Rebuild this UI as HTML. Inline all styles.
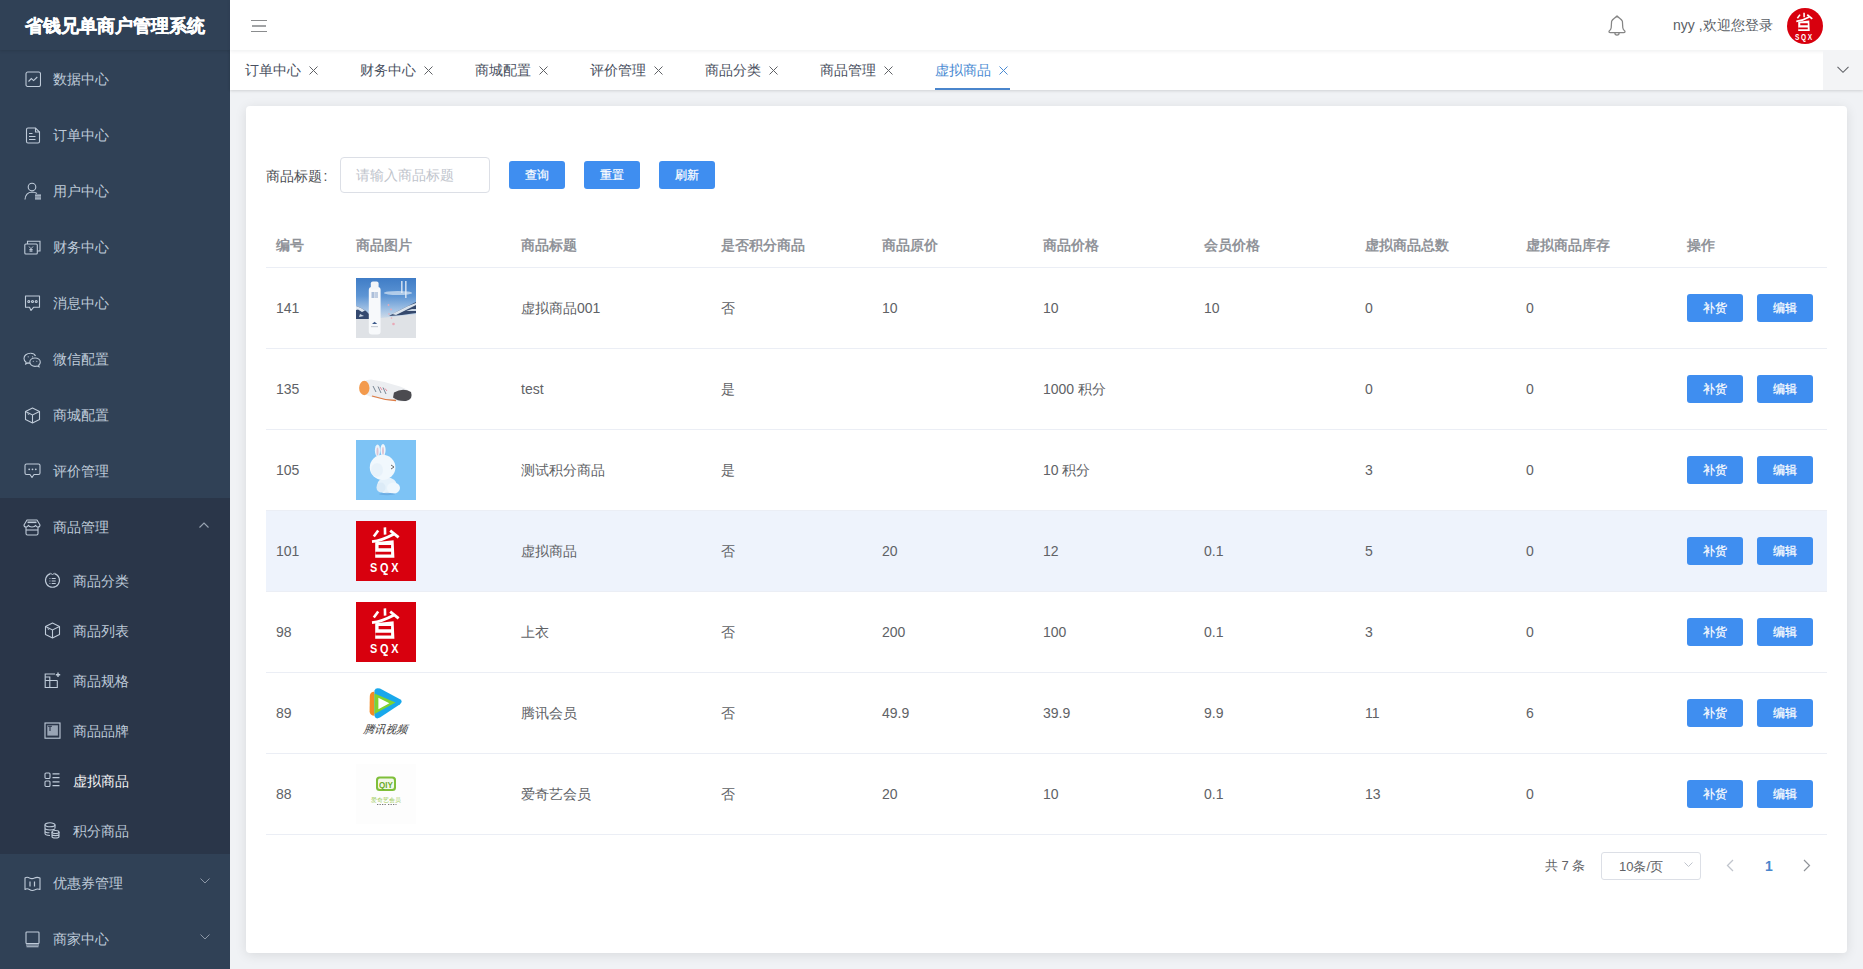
<!DOCTYPE html>
<html><head><meta charset="utf-8">
<style>
*{box-sizing:border-box;margin:0;padding:0}
html,body{width:1863px;height:969px;overflow:hidden;background:#f0f2f5;font-family:"Liberation Sans",sans-serif;font-size:14px;color:#606266}
.abs{position:absolute}
svg.abs{display:block}
#side{position:absolute;left:0;top:0;width:230px;height:969px;background:#304156}
#logo{position:absolute;left:0;top:0;width:230px;height:50px;padding-top:1px;color:#fff;font-weight:bold;font-size:18px;text-align:center;line-height:50px;-webkit-text-stroke:0.35px #fff;box-shadow:0 1px 3px rgba(0,0,0,.12)}
.mi{position:absolute;left:0;width:230px;height:56px;color:#bfcbd9;font-size:14px;line-height:56px}
.mi .t{position:absolute;left:53px;top:1px}
.sub{position:absolute;left:0;width:230px;height:50px;color:#bfcbd9;font-size:14px;line-height:50px}
.sub .t{position:absolute;left:73px;top:1.5px}
#hdr{position:absolute;left:230px;top:0;width:1633px;height:50px;background:#fff;box-shadow:0 1px 4px rgba(0,21,41,.08)}
#tags{position:absolute;left:230px;top:50px;width:1633px;height:40px;background:#fff;box-shadow:0 1px 3px 0 rgba(0,0,0,.12),0 0 3px 0 rgba(0,0,0,.04)}
.tag{position:absolute;top:60px;height:20px;line-height:20px;color:#495060;font-size:14px;white-space:nowrap}
#card{position:absolute;left:246px;top:106px;width:1601px;height:847px;background:#fff;border-radius:4px;box-shadow:0 2px 12px 0 rgba(0,0,0,.1)}
.btn{position:absolute;height:28px;width:56px;background:#3f8ef0;border-radius:3px;color:#fff;font-size:12px;line-height:29px;text-align:center;-webkit-text-stroke:0.2px #fff}
.th{position:absolute;top:235px;color:#909399;font-weight:bold;font-size:14px;line-height:20px;white-space:nowrap}
.hl{position:absolute;left:266px;width:1561px;height:1px;background:#ebeef5}
.td{position:absolute;color:#606266;font-size:14px;line-height:20px;white-space:nowrap}
.img{position:absolute;left:356px;width:60px;height:60px;overflow:hidden}
</style></head><body>
<div id="side">
<div id="logo">省钱兄单商户管理系统</div>
<div class="mi" style="top:50px"><span class="t">数据中心</span></div>
<svg class="abs" style="left:24.5px;top:71px" width="16" height="16" viewBox="0 0 16 16" fill="none" stroke="#bfcbd9" stroke-width="1.1"><rect x="1" y="1" width="14.5" height="14.5" rx="1.8"/><path d="M3.5 10.5 L6.3 7.6 L8.6 9.6 L12.3 6"/></svg>
<div class="mi" style="top:106px"><span class="t">订单中心</span></div>
<svg class="abs" style="left:24.5px;top:127px" width="16" height="17" viewBox="0 0 16 17" fill="none" stroke="#bfcbd9" stroke-width="1.1"><path d="M1.5 2.5 Q1.5 1 3 1 L10.5 1 L14.5 5 L14.5 14.5 Q14.5 16 13 16 L3 16 Q1.5 16 1.5 14.5 Z"/><path d="M10.5 1 L10.5 5 L14.5 5" /><path d="M4 6.5 H7.5 M4 9.5 H10.5 M4 12.5 H10.5" stroke-width="1.2"/></svg>
<div class="mi" style="top:162px"><span class="t">用户中心</span></div>
<svg class="abs" style="left:23.5px;top:182px" width="18" height="18" viewBox="0 0 18 18" fill="none" stroke="#bfcbd9" stroke-width="1.1"><circle cx="8" cy="5" r="3.8"/><path d="M1 17.5 Q1.5 10.5 8 10 Q11 10 13 11.5"/><rect x="11" y="12.5" width="6" height="5" fill="#bfcbd9" stroke="none"/><path d="M11 14.2 H17 M11 15.9 H17" stroke="#304156" stroke-width="0.6"/></svg>
<div class="mi" style="top:218px"><span class="t">财务中心</span></div>
<svg class="abs" style="left:24px;top:239.5px" width="17" height="15" viewBox="0 0 17 15" fill="none" stroke="#bfcbd9" stroke-width="1.1"><rect x="0.8" y="4" width="12.5" height="10" rx="1"/><path d="M3.5 4 V1.2 H16 V11 H13.3"/><path d="M5 6.5 L7 8.8 L9 6.5 M7 8.8 V12 M5.3 9.5 H8.7 M5.3 11 H8.7" stroke-width="0.9"/></svg>
<div class="mi" style="top:274px"><span class="t">消息中心</span></div>
<svg class="abs" style="left:24px;top:295px" width="17" height="17" viewBox="0 0 17 17" fill="none" stroke="#bfcbd9" stroke-width="1.1"><path d="M1.5 1 H15.5 V12.3 H9.5 L7 15.5 L5.5 12.3 H1.5 Z" stroke-linejoin="round"/><circle cx="4.8" cy="6.5" r="1"/><circle cx="8.5" cy="6.5" r="1"/><circle cx="12.2" cy="6.5" r="1"/></svg>
<div class="mi" style="top:330px"><span class="t">微信配置</span></div>
<svg class="abs" style="left:23px;top:351.5px" width="19" height="16" viewBox="0 0 19 16" fill="none" stroke="#bfcbd9" stroke-width="1.1"><path d="M7.5 1.2 C3.8 1.2 1 3.5 1 6.4 C1 8 1.8 9.3 3.1 10.2 L2.7 12 L4.8 10.9 C5.6 11.1 6.4 11.3 7.3 11.3"/><path d="M6.8 10.2 C6.8 7.8 9.2 6 12 6 C14.9 6 17.3 7.8 17.3 10.2 C17.3 11.4 16.7 12.4 15.7 13.2 L16 14.8 L14.3 14 C13.6 14.2 12.8 14.4 12 14.4 C9.2 14.4 6.8 12.5 6.8 10.2 Z"/><path d="M12.5 4 C11.8 2.3 9.9 1.2 7.5 1.2"/><circle cx="5.2" cy="4.8" r="0.6" fill="#bfcbd9" stroke="none"/><circle cx="9.6" cy="4.8" r="0.6" fill="#bfcbd9" stroke="none"/><circle cx="10.3" cy="9.3" r="0.55" fill="#bfcbd9" stroke="none"/><circle cx="13.8" cy="9.3" r="0.55" fill="#bfcbd9" stroke="none"/></svg>
<div class="mi" style="top:386px"><span class="t">商城配置</span></div>
<svg class="abs" style="left:23.5px;top:406.5px" width="17" height="17" viewBox="0 0 17 17" fill="none" stroke="#bfcbd9" stroke-width="1.1"><path d="M8.5 1 L15.5 4.5 L15.5 12.5 L8.5 16 L1.5 12.5 L1.5 4.5 Z" stroke-linejoin="round"/><path d="M1.5 4.5 L8.5 8 L15.5 4.5 M8.5 8 V16"/><path d="M3.5 6.8 L5.2 7.6" stroke-width="0.9"/></svg>
<div class="mi" style="top:442px"><span class="t">评价管理</span></div>
<svg class="abs" style="left:24px;top:463px" width="17" height="16" viewBox="0 0 17 16" fill="none" stroke="#bfcbd9" stroke-width="1.1"><path d="M2.5 1 H14.5 Q16 1 16 2.5 V10 Q16 11.5 14.5 11.5 H10 L8 14.5 L6 11.5 H2.5 Q1 11.5 1 10 V2.5 Q1 1 2.5 1 Z" stroke-linejoin="round"/><circle cx="5.2" cy="6.3" r="0.9" fill="#bfcbd9" stroke="none"/><circle cx="8.5" cy="6.3" r="0.9" fill="#bfcbd9" stroke="none"/><circle cx="11.8" cy="6.3" r="0.9" fill="#bfcbd9" stroke="none"/></svg>
<div class="abs" style="left:0;top:498px;width:230px;height:56px;background:#2a3649"></div>
<div class="mi" style="top:498px"><span class="t">商品管理</span></div><svg class="abs" style="left:23px;top:518.5px" width="18" height="17" viewBox="0 0 18 17" fill="none" stroke="#bfcbd9" stroke-width="1.1"><path d="M4 1 H14 L17 6 Q17 8 15 8 Q13 8 12.7 6.3 Q12 8 9 8 Q6 8 5.3 6.3 Q5 8 3 8 Q1 8 1 6 Z" stroke-linejoin="round"/><path d="M3 8 V14.5 Q3 16 4.5 16 H13.5 Q15 16 15 14.5 V8"/><path d="M4.5 3.3 H13.5" stroke-width="1.6"/><path d="M3 11 H15"/></svg>
<svg class="abs" style="left:199px;top:522px" width="10" height="6" viewBox="0 0 10 6" fill="none" stroke="#9aa5b3" stroke-width="1.1"><path d="M0.5 5.5 L5 1 L9.5 5.5"/></svg>
<div class="abs" style="left:0;top:554px;width:230px;height:300px;background:#2a3649"></div>
<div class="sub" style="top:554px"><span class="t">商品分类</span></div>
<svg class="abs" style="left:43.5px;top:572px" width="17" height="17" viewBox="0 0 17 17" fill="none" stroke="#bfcbd9" stroke-width="1.1"><path d="M6.5 1.6 A7 7 0 1 0 10.5 1.6"/><path d="M6.5 0.8 L8.5 3 L10.5 0.8" stroke-width="0.9"/><path d="M5.5 6.5 H6.4 M7.7 6.5 H11.7 M5.5 9 H6.4 M7.7 9 H11.7 M5.5 11.5 H6.4 M7.7 11.5 H11.7" stroke-width="1.1"/></svg>
<div class="sub" style="top:604px"><span class="t">商品列表</span></div>
<svg class="abs" style="left:43.5px;top:621.5px" width="17" height="17" viewBox="0 0 17 17" fill="none" stroke="#bfcbd9" stroke-width="1.1"><path d="M8.5 1 L15.5 4.5 L15.5 12.5 L8.5 16 L1.5 12.5 L1.5 4.5 Z" stroke-linejoin="round"/><path d="M1.5 4.5 L8.5 8 L15.5 4.5 M8.5 8 V16"/><path d="M3.5 6.8 L5.2 7.6" stroke-width="0.9"/></svg>
<div class="sub" style="top:654px"><span class="t">商品规格</span></div>
<svg class="abs" style="left:43.5px;top:672px" width="17" height="17" viewBox="0 0 17 17" fill="none" stroke="#bfcbd9" stroke-width="1.1"><path d="M11 2 H1.2 V15.5 H13.3 V8.5"/><path d="M1.2 8.5 H13.3 M5.8 8.5 V15.5 M1.2 5 H5.8 V8.5"/><path d="M14 0.5 V5 M11.8 2.7 H16.2" stroke-width="1.4"/></svg>
<div class="sub" style="top:704px"><span class="t">商品品牌</span></div>
<svg class="abs" style="left:43.5px;top:721.5px" width="17" height="17" viewBox="0 0 17 17" fill="none" stroke="#bfcbd9" stroke-width="1.1"><rect x="1" y="1" width="15" height="15.2"/><rect x="3.3" y="3.3" width="10.6" height="10.3" fill="#bfcbd9" stroke="none" opacity="0.75"/><path d="M4 4.2 H8 M6 4.2 V9" stroke="#2a3649" stroke-width="1.1"/></svg>
<div class="sub" style="top:754px;color:#f4f4f5"><span class="t">虚拟商品</span></div>
<svg class="abs" style="left:43.5px;top:772px" width="17" height="17" viewBox="0 0 17 17" fill="none" stroke="#bfcbd9" stroke-width="1.1"><rect x="1" y="1" width="5" height="5.5" rx="1"/><rect x="1" y="9" width="5" height="5.5" rx="1"/><path d="M8.5 1.8 H15.5 M8.5 5.7 H15.5 M8.5 9.8 H15.5 M8.5 13.7 H15.5" stroke-width="1.2"/></svg>
<div class="sub" style="top:804px"><span class="t">积分商品</span></div>
<svg class="abs" style="left:44px;top:821.5px" width="16" height="17" viewBox="0 0 16 17" fill="none" stroke="#bfcbd9" stroke-width="1.1"><ellipse cx="6" cy="2.8" rx="5" ry="2"/><path d="M1 2.8 V11.5 Q1 13.3 6 13.5 M11 2.8 V6.5 M1 6 Q1 7.8 6 8 Q9.5 8 10.8 7 M1 9 Q1 10.7 5.5 10.8"/><ellipse cx="11.5" cy="10" rx="3.5" ry="1.5"/><path d="M8 10 V14.5 Q8 16 11.5 16 Q15 16 15 14.5 V10 M8 12.3 Q8 13.6 11.5 13.6 Q15 13.6 15 12.3"/></svg>
<div class="mi" style="top:854px"><span class="t">优惠券管理</span></div>
<svg class="abs" style="left:23.5px;top:875.5px" width="17" height="16" viewBox="0 0 17 16" fill="none" stroke="#bfcbd9" stroke-width="1.1"><path d="M1 2 Q3 0.5 5.5 2 Q8 3.3 10.5 2 Q13 0.7 16 2 V13.5 Q13.5 12.3 11 13.8 Q8 15.3 5.5 13.5 Q3 12 1 13.5 Z" stroke-linejoin="round"/><path d="M6 5.5 V10.5 M10.5 5.5 V10.5" stroke-width="1.2"/></svg>
<svg class="abs" style="left:199.5px;top:878px" width="10" height="6" viewBox="0 0 10 6" fill="none" stroke="#8c97a6" stroke-width="1"><path d="M0.5 0.5 L5 5 L9.5 0.5"/></svg>
<div class="mi" style="top:910px"><span class="t">商家中心</span></div>
<svg class="abs" style="left:24.5px;top:931px" width="15" height="17" viewBox="0 0 15 17" fill="none" stroke="#bfcbd9" stroke-width="1.1"><rect x="1" y="1" width="13" height="11.5" rx="0.8"/><path d="M1 14 H14 M1.5 15.8 H13.5" stroke-width="1.1"/></svg>
<svg class="abs" style="left:199.5px;top:934px" width="10" height="6" viewBox="0 0 10 6" fill="none" stroke="#8c97a6" stroke-width="1"><path d="M0.5 0.5 L5 5 L9.5 0.5"/></svg>
</div>
<div id="tags"></div><div id="hdr"></div>
<svg class="abs" style="left:240px;top:10px" width="40" height="32" viewBox="0 0 40 32" fill="none" stroke="#8a8c8e" stroke-width="1.2"><path d="M11 10.5 H27 M11 21.5 H27"/><path d="M12 16 H26" stroke-width="1.6"/></svg>
<svg class="abs" style="left:1600px;top:10px" width="35" height="32" viewBox="0 0 35 32" fill="none" stroke="#858585" stroke-width="1.25" stroke-linejoin="round"><path d="M17 6 C15.5 7.8 12.5 9.2 11.6 11.2 L11.2 17.8 Q11 19.6 9.2 21 Q8.4 22.6 10.4 22.7 H23.6 Q25.6 22.6 24.8 21 Q23 19.6 22.8 17.8 L22.4 11.2 C21.5 9.2 18.5 7.8 17 6 Z"/><path d="M14.9 23 A2.1 2 0 0 0 19.1 23"/></svg>
<div class="abs" style="left:1673px;top:15px;line-height:20px;font-size:14px;color:#5a5e66;white-space:nowrap">nyy ,欢迎您登录</div>
<div class="abs" style="left:1787px;top:8px;width:36px;height:36px"><svg width="36" height="36" viewBox="0 0 36 36" style="display:block"><circle cx="18" cy="18" r="18" fill="#d8000e"/><g transform="translate(-0.3 1) scale(0.6)"><g fill="none" stroke="#fff" stroke-linecap="butt">
<path d="M17.8 15.4 L22.2 9.4" stroke-width="2.6"/>
<path d="M28.9 6.4 L29.1 13.6" stroke-width="2.6"/>
<path d="M34.2 9.6 L42.6 16.4" stroke-width="2.8"/>
<path d="M16 20.6 Q26 19.5 37.6 13.2" stroke-width="2.8"/>
</g>
<path fill="#fff" d="M19.2 21.2 L37.6 19.2 L38.4 36.7 L19.2 36.7 Z M22.6 23.9 L22.6 27.2 L35.1 27.2 L35.1 23.9 Z M19.5 30.8 L19.5 33.6 L35.1 33.6 L35.1 30.8 Z"/>
<text x="29.6" y="51.2" text-anchor="middle" fill="#fff" font-family="Liberation Sans" font-weight="bold" font-size="13.6" letter-spacing="3.4" transform="translate(29.6 0) scale(0.8 1) translate(-29.6 0)">SQX</text>
<path d="M27 53 Q29.5 54.2 32 53.2" stroke="#fff" stroke-width="0.8" fill="none"/></g></svg></div>
<div class="tag" style="left:245px;color:#495060">订单中心</div>
<svg class="abs" style="left:308.5px;top:65.5px" width="9" height="9" viewBox="0 0 9 9" fill="none" stroke="#606266" stroke-width="1"><path d="M0.5 0.5 L8.5 8.5 M8.5 0.5 L0.5 8.5"/></svg>
<div class="tag" style="left:360px;color:#495060">财务中心</div>
<svg class="abs" style="left:423.5px;top:65.5px" width="9" height="9" viewBox="0 0 9 9" fill="none" stroke="#606266" stroke-width="1"><path d="M0.5 0.5 L8.5 8.5 M8.5 0.5 L0.5 8.5"/></svg>
<div class="tag" style="left:475px;color:#495060">商城配置</div>
<svg class="abs" style="left:538.5px;top:65.5px" width="9" height="9" viewBox="0 0 9 9" fill="none" stroke="#606266" stroke-width="1"><path d="M0.5 0.5 L8.5 8.5 M8.5 0.5 L0.5 8.5"/></svg>
<div class="tag" style="left:590px;color:#495060">评价管理</div>
<svg class="abs" style="left:653.5px;top:65.5px" width="9" height="9" viewBox="0 0 9 9" fill="none" stroke="#606266" stroke-width="1"><path d="M0.5 0.5 L8.5 8.5 M8.5 0.5 L0.5 8.5"/></svg>
<div class="tag" style="left:705px;color:#495060">商品分类</div>
<svg class="abs" style="left:768.5px;top:65.5px" width="9" height="9" viewBox="0 0 9 9" fill="none" stroke="#606266" stroke-width="1"><path d="M0.5 0.5 L8.5 8.5 M8.5 0.5 L0.5 8.5"/></svg>
<div class="tag" style="left:820px;color:#495060">商品管理</div>
<svg class="abs" style="left:883.5px;top:65.5px" width="9" height="9" viewBox="0 0 9 9" fill="none" stroke="#606266" stroke-width="1"><path d="M0.5 0.5 L8.5 8.5 M8.5 0.5 L0.5 8.5"/></svg>
<div class="tag" style="left:935px;color:#4b8bd3">虚拟商品</div>
<svg class="abs" style="left:998.5px;top:65.5px" width="9" height="9" viewBox="0 0 9 9" fill="none" stroke="#4b8bd3" stroke-width="1"><path d="M0.5 0.5 L8.5 8.5 M8.5 0.5 L0.5 8.5"/></svg>
<div class="abs" style="left:935px;top:88px;width:75px;height:2px;background:#4a85cc"></div>
<div class="abs" style="left:1823px;top:50px;width:40px;height:40px;background:#f3f4f6"></div>
<svg class="abs" style="left:1837px;top:65.5px" width="12" height="8" viewBox="0 0 12 8" fill="none" stroke="#5f6166" stroke-width="1.05"><path d="M0.5 0.8 L6 6.3 L11.5 0.8"/></svg>
<div id="card"></div>
<div class="abs" style="left:266px;top:165.5px;line-height:20px;color:#4c4e52;white-space:nowrap">商品标题<span style="margin-left:1.5px">:</span></div>
<div class="abs" style="left:340px;top:157px;width:150px;height:36px;border:1px solid #dcdfe6;border-radius:4px;background:#fff"></div>
<div class="abs" style="left:356px;top:165px;line-height:20px;color:#c0c4cc">请输入商品标题</div>
<div class="btn" style="left:509px;top:161px">查询</div>
<div class="btn" style="left:584px;top:161px">重置</div>
<div class="btn" style="left:659px;top:161px">刷新</div>
<div class="th" style="left:276px">编号</div>
<div class="th" style="left:356px">商品图片</div>
<div class="th" style="left:521px">商品标题</div>
<div class="th" style="left:721px">是否积分商品</div>
<div class="th" style="left:882px">商品原价</div>
<div class="th" style="left:1043px">商品价格</div>
<div class="th" style="left:1204px">会员价格</div>
<div class="th" style="left:1365px">虚拟商品总数</div>
<div class="th" style="left:1526px">虚拟商品库存</div>
<div class="th" style="left:1687px">操作</div>
<div class="hl" style="top:267px"></div>
<div class="hl" style="top:348px"></div>
<div class="td" style="left:276px;top:298px">141</div>
<div class="img" style="top:278px"><svg width="60" height="60" viewBox="0 0 60 60" style="display:block">
<defs><linearGradient id="sky" x1="0" y1="0" x2="0" y2="1"><stop offset="0" stop-color="#3f7cc6"/><stop offset="0.3" stop-color="#5d95d4"/><stop offset="0.55" stop-color="#a9c6e6"/><stop offset="0.7" stop-color="#d6dfe8"/><stop offset="1" stop-color="#dfe2e5"/></linearGradient></defs>
<rect width="60" height="60" fill="url(#sky)"/>
<ellipse cx="42" cy="15" rx="14" ry="2" fill="#cfe0f2" opacity="0.75"/>
<path d="M0 28 L5 30 L10 33 L14 37 L14 41 L0 41 Z" fill="#34496f"/>
<path d="M0 28 L5 30 L9 32.5 L6 34 L2 31.5 L0 32 Z" fill="#dfe7f0"/>
<path d="M4 36 L8 38 L3 39 Z" fill="#c9d5e3"/>
<path d="M33 38 L42 33 L50 29 L60 24 L60 35 L46 37 Z" fill="#34486c"/>
<path d="M36 36 L44 32 L52 28 L60 25 L60 27 L52 31 L46 34 L40 37 Z" fill="#d9e2ec"/>
<path d="M50 33 L56 31 L60 31 L60 33 Z" fill="#cdd8e4"/>
<path d="M0 41 L14 41 L30 39.5 L60 36 L60 60 L0 60 Z" fill="#dfe2e6"/>
<rect x="12.8" y="9" width="11.8" height="47.5" rx="3" fill="#f7f9fb"/>
<rect x="14.8" y="3.5" width="7.8" height="8" rx="2" fill="#f3f5f8"/>
<rect x="15.5" y="14" width="3" height="6" fill="#6f8fbf" opacity="0.55"/>
<rect x="19" y="14" width="3" height="6" fill="#6f8fbf" opacity="0.4"/>
<path d="M16 46 L18.6 43.8 L21.2 46 Z" fill="#3c5a8a"/>
<rect x="15" y="48" width="7" height="1.2" fill="#c8ced6"/>
<g fill="#e9a9b6"><circle cx="32.5" cy="27" r="0.9"/><circle cx="35" cy="31.5" r="0.9"/><circle cx="33" cy="36" r="0.8"/><circle cx="35.5" cy="40" r="0.8"/><circle cx="37.5" cy="46" r="1.3"/></g>
<g fill="#e8eff8" opacity="0.8"><rect x="45" y="3" width="1.6" height="12"/><rect x="49" y="3" width="1.6" height="17"/></g>
</svg></div>
<div class="td" style="left:521px;top:298px">虚拟商品001</div>
<div class="td" style="left:721px;top:298px">否</div>
<div class="td" style="left:882px;top:298px">10</div>
<div class="td" style="left:1043px;top:298px">10</div>
<div class="td" style="left:1204px;top:298px">10</div>
<div class="td" style="left:1365px;top:298px">0</div>
<div class="td" style="left:1526px;top:298px">0</div>
<div class="btn" style="left:1687px;top:294px">补货</div>
<div class="btn" style="left:1757px;top:294px">编辑</div>
<div class="hl" style="top:429px"></div>
<div class="td" style="left:276px;top:379px">135</div>
<div class="img" style="top:359px"><svg width="60" height="60" viewBox="0 0 60 60" style="display:block">
<rect width="60" height="60" fill="#fff"/>
<path d="M4 27 Q7 20.5 15 20.5 Q30 22.5 44 27.5 Q55 31 56 37 Q55.5 42 48 42.5 Q34 42.5 20 39 Q5 36 4 27 Z" fill="#eceef1"/>
<ellipse cx="8.3" cy="29" rx="5.2" ry="7.2" fill="#f39a4c"/>
<path d="M38 33.5 Q47 28.5 55 33 Q57.5 40 50 42 Q42 42.5 37 38.5 Z" fill="#4b4b50"/>
<path d="M17 27 L20 33 M22 27.5 L25 34 M27 28.5 L30 35" stroke="#6a7a8a" stroke-width="0.9"/>
<path d="M24 28 L26 31 M29 29.5 L31 32" stroke="#e58fa0" stroke-width="1"/>
<path d="M16 37 Q28 41 40 41.5" stroke="#de7c44" stroke-width="1.3" fill="none"/>
</svg></div>
<div class="td" style="left:521px;top:379px">test</div>
<div class="td" style="left:721px;top:379px">是</div>
<div class="td" style="left:1043px;top:379px">1000 积分</div>
<div class="td" style="left:1365px;top:379px">0</div>
<div class="td" style="left:1526px;top:379px">0</div>
<div class="btn" style="left:1687px;top:375px">补货</div>
<div class="btn" style="left:1757px;top:375px">编辑</div>
<div class="hl" style="top:510px"></div>
<div class="td" style="left:276px;top:460px">105</div>
<div class="img" style="top:440px"><svg width="60" height="60" viewBox="0 0 60 60" style="display:block">
<rect width="60" height="60" fill="#7dc3f5"/>
<ellipse cx="21.5" cy="10.5" rx="2.6" ry="6" fill="#e9f3fb"/>
<ellipse cx="27" cy="10" rx="2.6" ry="6" fill="#eef6fc"/>
<ellipse cx="21.5" cy="11.5" rx="1" ry="4" fill="#dfc4d3"/>
<ellipse cx="27" cy="11" rx="1" ry="4" fill="#dfc4d3"/>
<ellipse cx="31" cy="45.5" rx="10" ry="8" fill="#e6f2fb"/>
<ellipse cx="37.5" cy="48" rx="6.5" ry="5.5" fill="#eff7fd"/>
<ellipse cx="25" cy="47.5" rx="4.5" ry="5" fill="#dcebf7"/>
<ellipse cx="26.6" cy="27.4" rx="12.8" ry="12.6" fill="#f1f8fd"/>
<ellipse cx="21" cy="30" rx="6" ry="7" fill="#e3eff9" opacity="0.6"/>
<path d="M35 25 L38 27 L35 29" stroke="#444" stroke-width="0.8" fill="none"/>
<ellipse cx="31" cy="54" rx="8" ry="1.2" fill="#5f9fd8" opacity="0.6"/>
</svg></div>
<div class="td" style="left:521px;top:460px">测试积分商品</div>
<div class="td" style="left:721px;top:460px">是</div>
<div class="td" style="left:1043px;top:460px">10 积分</div>
<div class="td" style="left:1365px;top:460px">3</div>
<div class="td" style="left:1526px;top:460px">0</div>
<div class="btn" style="left:1687px;top:456px">补货</div>
<div class="btn" style="left:1757px;top:456px">编辑</div>
<div class="abs" style="left:266px;top:511px;width:1561px;height:80px;background:#eef3fc"></div>
<div class="hl" style="top:591px"></div>
<div class="td" style="left:276px;top:541px">101</div>
<div class="img" style="top:521px"><svg width="60" height="60" viewBox="0 0 60 60" style="display:block"><rect width="60" height="60" fill="#d8000e"/><g fill="none" stroke="#fff" stroke-linecap="butt">
<path d="M17.8 15.4 L22.2 9.4" stroke-width="2.6"/>
<path d="M28.9 6.4 L29.1 13.6" stroke-width="2.6"/>
<path d="M34.2 9.6 L42.6 16.4" stroke-width="2.8"/>
<path d="M16 20.6 Q26 19.5 37.6 13.2" stroke-width="2.8"/>
</g>
<path fill="#fff" d="M19.2 21.2 L37.6 19.2 L38.4 36.7 L19.2 36.7 Z M22.6 23.9 L22.6 27.2 L35.1 27.2 L35.1 23.9 Z M19.5 30.8 L19.5 33.6 L35.1 33.6 L35.1 30.8 Z"/>
<text x="29.6" y="51.2" text-anchor="middle" fill="#fff" font-family="Liberation Sans" font-weight="bold" font-size="13.6" letter-spacing="3.4" transform="translate(29.6 0) scale(0.8 1) translate(-29.6 0)">SQX</text>
<path d="M27 53 Q29.5 54.2 32 53.2" stroke="#fff" stroke-width="0.8" fill="none"/></svg></div>
<div class="td" style="left:521px;top:541px">虚拟商品</div>
<div class="td" style="left:721px;top:541px">否</div>
<div class="td" style="left:882px;top:541px">20</div>
<div class="td" style="left:1043px;top:541px">12</div>
<div class="td" style="left:1204px;top:541px">0.1</div>
<div class="td" style="left:1365px;top:541px">5</div>
<div class="td" style="left:1526px;top:541px">0</div>
<div class="btn" style="left:1687px;top:537px">补货</div>
<div class="btn" style="left:1757px;top:537px">编辑</div>
<div class="hl" style="top:672px"></div>
<div class="td" style="left:276px;top:622px">98</div>
<div class="img" style="top:602px"><svg width="60" height="60" viewBox="0 0 60 60" style="display:block"><rect width="60" height="60" fill="#d8000e"/><g fill="none" stroke="#fff" stroke-linecap="butt">
<path d="M17.8 15.4 L22.2 9.4" stroke-width="2.6"/>
<path d="M28.9 6.4 L29.1 13.6" stroke-width="2.6"/>
<path d="M34.2 9.6 L42.6 16.4" stroke-width="2.8"/>
<path d="M16 20.6 Q26 19.5 37.6 13.2" stroke-width="2.8"/>
</g>
<path fill="#fff" d="M19.2 21.2 L37.6 19.2 L38.4 36.7 L19.2 36.7 Z M22.6 23.9 L22.6 27.2 L35.1 27.2 L35.1 23.9 Z M19.5 30.8 L19.5 33.6 L35.1 33.6 L35.1 30.8 Z"/>
<text x="29.6" y="51.2" text-anchor="middle" fill="#fff" font-family="Liberation Sans" font-weight="bold" font-size="13.6" letter-spacing="3.4" transform="translate(29.6 0) scale(0.8 1) translate(-29.6 0)">SQX</text>
<path d="M27 53 Q29.5 54.2 32 53.2" stroke="#fff" stroke-width="0.8" fill="none"/></svg></div>
<div class="td" style="left:521px;top:622px">上衣</div>
<div class="td" style="left:721px;top:622px">否</div>
<div class="td" style="left:882px;top:622px">200</div>
<div class="td" style="left:1043px;top:622px">100</div>
<div class="td" style="left:1204px;top:622px">0.1</div>
<div class="td" style="left:1365px;top:622px">3</div>
<div class="td" style="left:1526px;top:622px">0</div>
<div class="btn" style="left:1687px;top:618px">补货</div>
<div class="btn" style="left:1757px;top:618px">编辑</div>
<div class="hl" style="top:753px"></div>
<div class="td" style="left:276px;top:703px">89</div>
<div class="img" style="top:683px"><svg width="60" height="60" viewBox="0 0 60 60" style="display:block">
<rect width="60" height="60" fill="#fff"/>
<path d="M18.5 8.6 Q14 9 13.8 13 L13.6 28.5 Q13.8 32.5 18.5 32.8 Z" fill="#f48a24"/>
<path d="M18.5 7.5 Q19.5 4.2 24 5.6 L44 16.2 Q47.4 18.2 44 21.3 L24 34.6 Q19.6 36.8 18.5 33 Z" fill="#19a8eb"/>
<path d="M18.5 10.5 L39.5 19.6 L18.5 31 Z" fill="#7fd32f"/>
<path d="M22.4 14.8 L33.4 20.3 L22.4 26.3 Z" fill="#fff"/>
<text x="29.5" y="49.6" text-anchor="middle" fill="#3a3a3a" font-size="11" font-style="italic" transform="skewX(-8) translate(6.5 0)">腾讯视频</text>
</svg></div>
<div class="td" style="left:521px;top:703px">腾讯会员</div>
<div class="td" style="left:721px;top:703px">否</div>
<div class="td" style="left:882px;top:703px">49.9</div>
<div class="td" style="left:1043px;top:703px">39.9</div>
<div class="td" style="left:1204px;top:703px">9.9</div>
<div class="td" style="left:1365px;top:703px">11</div>
<div class="td" style="left:1526px;top:703px">6</div>
<div class="btn" style="left:1687px;top:699px">补货</div>
<div class="btn" style="left:1757px;top:699px">编辑</div>
<div class="hl" style="top:834px"></div>
<div class="td" style="left:276px;top:784px">88</div>
<div class="img" style="top:764px"><svg width="60" height="60" viewBox="0 0 60 60" style="display:block">
<rect width="60" height="60" fill="#fdfdfd"/>
<rect x="20" y="12.5" width="20" height="14.5" rx="3.5" fill="#7fbf3a"/>
<rect x="22" y="14.5" width="16" height="10.5" rx="2" fill="#f2f8ea"/>
<text x="30" y="23.8" text-anchor="middle" fill="#6aab2a" font-family="Liberation Sans" font-weight="bold" font-size="9.5" transform="translate(30 0) scale(0.85 1) translate(-30 0)">QIY</text>
<text x="30" y="37.6" text-anchor="middle" fill="#9bcb55" font-size="6.3">爱奇艺会员</text>
<g fill="#777"><rect x="21" y="40" width="1.3" height="1"/><rect x="23.5" y="40" width="1.3" height="1"/><rect x="26" y="40" width="1.3" height="1"/><rect x="28.5" y="40" width="1.3" height="1"/><rect x="32" y="40" width="1.3" height="1"/><rect x="34.5" y="40" width="1.3" height="1"/><rect x="37" y="40" width="1.3" height="1"/><rect x="39.5" y="40" width="1" height="1"/></g>
</svg></div>
<div class="td" style="left:521px;top:784px">爱奇艺会员</div>
<div class="td" style="left:721px;top:784px">否</div>
<div class="td" style="left:882px;top:784px">20</div>
<div class="td" style="left:1043px;top:784px">10</div>
<div class="td" style="left:1204px;top:784px">0.1</div>
<div class="td" style="left:1365px;top:784px">13</div>
<div class="td" style="left:1526px;top:784px">0</div>
<div class="btn" style="left:1687px;top:780px">补货</div>
<div class="btn" style="left:1757px;top:780px">编辑</div>
<div class="abs" style="left:1545px;top:856px;line-height:20px;font-size:13px;color:#606266;white-space:pre">共 7 条</div>
<div class="abs" style="left:1601px;top:852px;width:100px;height:28px;border:1px solid #dcdfe6;border-radius:3px;background:#fff"></div>
<div class="abs" style="left:1619px;top:857px;line-height:20px;font-size:13px;color:#606266">10条/页</div>
<svg class="abs" style="left:1684px;top:862px" width="9" height="6" viewBox="0 0 9 6" fill="none" stroke="#c0c4cc" stroke-width="1"><path d="M0.5 0.5 L4.5 4.5 L8.5 0.5"/></svg>
<svg class="abs" style="left:1726px;top:859px" width="8" height="13" viewBox="0 0 8 13" fill="none" stroke="#c0c4cc" stroke-width="1.3"><path d="M7 1 L1.5 6.5 L7 12"/></svg>
<div class="abs" style="left:1765px;top:855.5px;line-height:20px;font-size:14px;font-weight:bold;color:#4a86cc">1</div>
<svg class="abs" style="left:1803px;top:859px" width="8" height="13" viewBox="0 0 8 13" fill="none" stroke="#8f9398" stroke-width="1.2"><path d="M1 1 L6.5 6.5 L1 12"/></svg>
</body></html>
